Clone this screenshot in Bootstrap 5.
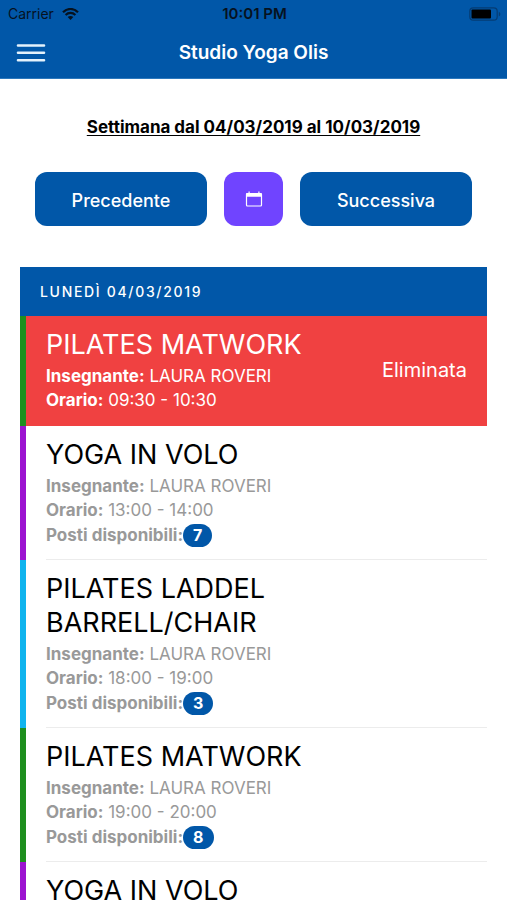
<!DOCTYPE html>
<html lang="it">
<head>
<meta charset="utf-8">
<meta name="viewport" content="width=device-width, initial-scale=1">
<title>Studio Yoga Olis</title>
<link href="https://cdn.jsdelivr.net/npm/bootstrap@5.3.0/dist/css/bootstrap.min.css" rel="stylesheet">
<style>
:root { --brand: #0157a8; }
body { font-family: Inter, "Liberation Sans", sans-serif; color: #000; background: #fff; }
.bg-brand { background: var(--brand); }
.status-bar { height: 27px; padding: 0 6px 0 8px; font-size: 14px; line-height: 27px; color: #06121f; }
.clock { font-size: 15px; }
.title-bar { height: 52px; padding: 0 16px; border-bottom: 1px solid #2c78bd; }
.menu-btn { width: 30px; height: 24px; }
.app-title { font-size: 19px; line-height: 24px; font-weight: 600; }
.scroll-area { padding: 36px 20px 0; scrollbar-width: none; }
.scroll-area::-webkit-scrollbar { display: none; }
.week { font-size: 17px; line-height: 24px; font-weight: 700; text-underline-offset: 2px; margin-bottom: 33px; }
.week-nav { gap: 17px; padding: 0 15px; margin-bottom: 41px; }
.nav-key { height: 54px; padding: 8px 12px 6px; border-radius: 12px; font-size: 18px; font-weight: 500; color: #fff; background: var(--brand); border: 0; }
.nav-key:hover { color: #fff; background: #014a90; }
.pick-key, .pick-key:hover { width: 59px; background: #7044ff; }
.day-head { height: 49px; padding: 0 20px; font-size: 14px; line-height: 50px; font-weight: 500; letter-spacing: .12em; color: #fff; margin: 0; }
.lesson { border-left: 6px solid; padding-left: 20px; }
.lesson-body { padding: 12px 20px 12px 0; border-bottom: 1px solid #ececec; }
.lesson h3 { font-size: 27px; line-height: 34px; font-weight: 400; margin: 0 0 2px; }
.lesson p { font-size: 17px; line-height: 24px; margin: 0; color: #999; }
.lesson p.seat-line { padding-top: 1px; }
.lesson strong { font-weight: 700; }
.tone-green { border-color: #1e8f1e; }
.tone-violet { border-color: #9c14d0; }
.tone-cyan { border-color: #10b4ee; }
.cancelled { background: #f04141; color: #fff; }
.cancelled .lesson-body { padding-bottom: 13px; border-color: #f04141; }
.cancelled p { color: #fff; }
.cancelled .state { font-size: 20px; line-height: 24px; }
.seats { padding: 4px 10px; font-size: 16px; line-height: 15px; font-weight: 700; background: var(--brand); }
</style>
</head>
<body>
<div class="vh-100 d-flex flex-column overflow-hidden">
  <header class="bg-brand flex-shrink-0">
    <div class="status-bar row g-0">
      <div class="col d-flex align-items-center gap-2">
        <span>Carrier</span>
        <svg width="17" height="12" viewBox="0 0 17 12" fill="none" stroke="#06121f" aria-hidden="true">
          <path d="M1 4.2C5.2-.1 11.800-.1 16 4.200" stroke-width="2.200"/>
          <path d="M3.600 6.900c2.800-2.700 7-2.700 9.800 0" stroke-width="2.100"/>
          <path d="M8.500 12 5.700 9.100c1.600-1.500 4-1.500 5.600 0z" fill="#06121f" stroke="none"/>
        </svg>
      </div>
      <div class="clock col-auto fw-semibold">10:01 PM</div>
      <div class="col d-flex align-items-center justify-content-end">
        <svg width="32" height="14" viewBox="0 0 32 14" aria-hidden="true">
          <rect x=".8" y=".8" width="27.400" height="12.400" rx="3.500" fill="none" stroke="#053c73" stroke-width="1.200"/>
          <rect x="2.500" y="2.500" width="19.500" height="9" rx="1" fill="#000"/>
          <path d="M29.800 4.700c2 .8 2 3.800 0 4.600z" fill="#053c73"/>
        </svg>
      </div>
    </div>
    <nav class="title-bar row g-0 align-items-center" aria-label="Principale">
      <div class="col d-flex">
        <button type="button" class="menu-btn btn p-0 border-0 d-flex align-items-center" aria-label="Menu">
          <svg width="30" height="20" viewBox="0 0 30 20" stroke="#e4f2fc" stroke-width="2.600" stroke-linecap="round" aria-hidden="true"><path d="M2 2.500h26M2 9.800h26M2 17.200h26"/></svg>
        </button>
      </div>
      <h1 class="app-title col-auto text-white m-0">Studio Yoga Olis</h1>
      <div class="col"></div>
    </nav>
  </header>

  <main class="scroll-area flex-grow-1 overflow-auto">
    <h2 class="week text-center text-decoration-underline">Settimana dal 04/03/2019 al 10/03/2019</h2>
    <div class="week-nav d-flex">
      <button type="button" class="btn nav-key flex-fill w-50">Precedente</button>
      <button type="button" class="btn nav-key pick-key flex-shrink-0 p-0 d-flex align-items-center justify-content-center" aria-label="Scegli data">
        <svg width="18" height="16" viewBox="0 0 18 16" aria-hidden="true">
          <rect x="1.500" y="2.500" width="15" height="12.500" rx="1" fill="none" stroke="#fff" stroke-width="1.200"/>
          <path d="M1 5.800V3.200q0-1.200 1.200-1.200h1.300V.6h1.200V2h8.600V.6h1.200V2h1.300q1.200 0 1.200 1.200v2.600z" fill="#fff"/>
        </svg>
      </button>
      <button type="button" class="btn nav-key flex-fill w-50">Successiva</button>
    </div>

    <section aria-labelledby="day">
      <h2 id="day" class="day-head bg-brand">LUNEDÌ 04/03/2019</h2>
      <article class="lesson tone-green cancelled">
        <div class="lesson-body d-flex align-items-center justify-content-between">
          <div>
            <h3>PILATES MATWORK</h3>
            <p><strong>Insegnante:</strong> LAURA ROVERI</p>
            <p><strong>Orario:</strong> 09:30 - 10:30</p>
          </div>
          <span class="state">Eliminata</span>
        </div>
      </article>
      <article class="lesson tone-violet">
        <div class="lesson-body">
          <h3>YOGA IN VOLO</h3>
          <p><strong>Insegnante:</strong> LAURA ROVERI</p>
          <p><strong>Orario:</strong> 13:00 - 14:00</p>
          <p class="seat-line d-flex align-items-center"><strong>Posti disponibili:</strong><span class="badge rounded-pill seats">7</span></p>
        </div>
      </article>
      <article class="lesson tone-cyan">
        <div class="lesson-body">
          <h3>PILATES LADDEL<br>BARRELL/CHAIR</h3>
          <p><strong>Insegnante:</strong> LAURA ROVERI</p>
          <p><strong>Orario:</strong> 18:00 - 19:00</p>
          <p class="seat-line d-flex align-items-center"><strong>Posti disponibili:</strong><span class="badge rounded-pill seats">3</span></p>
        </div>
      </article>
      <article class="lesson tone-green">
        <div class="lesson-body">
          <h3>PILATES MATWORK</h3>
          <p><strong>Insegnante:</strong> LAURA ROVERI</p>
          <p><strong>Orario:</strong> 19:00 - 20:00</p>
          <p class="seat-line d-flex align-items-center"><strong>Posti disponibili:</strong><span class="badge rounded-pill seats">8</span></p>
        </div>
      </article>
      <article class="lesson tone-violet">
        <div class="lesson-body">
          <h3>YOGA IN VOLO</h3>
        </div>
      </article>
    </section>
  </main>
</div>
<script src="https://cdn.jsdelivr.net/npm/bootstrap@5.3.0/dist/js/bootstrap.bundle.min.js"></script>
</body>
</html>
